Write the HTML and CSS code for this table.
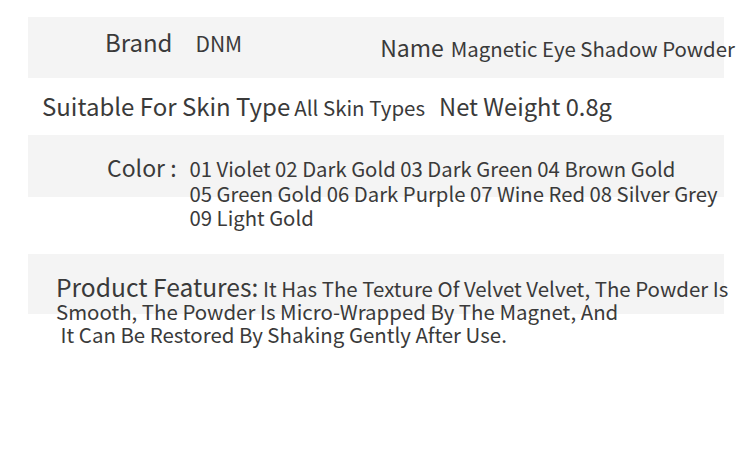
FILE: index.html
```html
<!DOCTYPE html>
<html>
<head>
<meta charset="utf-8">
<link rel="stylesheet" href="styles.css">
</head>
<body>
<div class="sheet">
  <div class="band band-top">
    <div class="pair pair-brand">
      <span class="label">Brand</span>
      <span class="value value-dnm">DNM</span>
    </div>
    <div class="pair pair-name">
      <span class="label label-name">Name</span>
      <span class="value value-name">Magnetic Eye Shadow Powder</span>
    </div>
  </div>
  <div class="row row-skin">
    <span class="label">Suitable For Skin Type</span>
    <span class="value">All Skin Types</span>
    <span class="label label-mid">Net Weight 0.8g</span>
  </div>
  <div class="band band-color">
    <span class="label label-color">Color :</span>
    <div class="value value-list">01 Violet 02 Dark Gold 03 Dark Green 04 Brown Gold<br>05 Green Gold 06 Dark Purple 07 Wine Red 08 Silver Grey<br>09 Light Gold</div>
  </div>
  <div class="row row-gap"></div>
  <div class="band band-features">
    <p class="features"><span class="label-inline">Product Features:</span> It Has The Texture Of Velvet Velvet, The Powder Is<br>Smooth, The Powder Is Micro-Wrapped By The Magnet, And<br>&nbsp;It Can Be Restored By Shaking Gently After Use.</p>
  </div>
</div>
</body>
</html>
```
FILE: styles.css
```css
* { box-sizing: border-box; }
html, body { margin: 0; padding: 0; background: #fff; }
body {
  font-family: "Noto Sans CJK SC", "Noto Sans", sans-serif;
  color: #3a3a3a;
  width: 750px;
  height: 454px;
  overflow: hidden;
}
.sheet {
  margin-left: 28px;
  width: 696px;
  padding-top: 17px;
}
.band { background: #f4f4f4; }
.label { font-size: 24px; line-height: 1; white-space: nowrap; }
.value { font-size: 20.5px; line-height: 1; white-space: nowrap; }

.band-top {
  height: 61px;
  display: flex;
  align-items: flex-start;
}
.pair { display: flex; align-items: baseline; }
.pair-brand { padding-left: 77px; padding-top: 13px; gap: 23px; }
.value-dnm { font-size: 21px; }
.pair-name { margin-left: 138px; padding-top: 19px; gap: 7px; }
.label-name { font-size: 23px; }
.value-name { font-size: 20.4px; }

.row-skin {
  height: 57px;
  display: flex;
  align-items: baseline;
  padding-left: 14px;
  padding-top: 16px;
  gap: 4px;
}
.row-skin .label-mid { margin-left: 10px; font-size: 23.7px; }

.band-color {
  height: 62px;
  display: flex;
  align-items: baseline;
  padding-left: 79px;
  padding-top: 21px;
  gap: 13px;
}
.label-color { font-size: 23px; }
.value-list { font-size: 20.3px; line-height: 24.5px; }

.row-gap { height: 57px; }

.band-features { height: 60px; padding-top: 21px; }
.features {
  margin: 0;
  padding-left: 28px;
  font-size: 20.45px;
  line-height: 23px;
  white-space: nowrap;
}
.label-inline { font-size: 24.6px; }
```
